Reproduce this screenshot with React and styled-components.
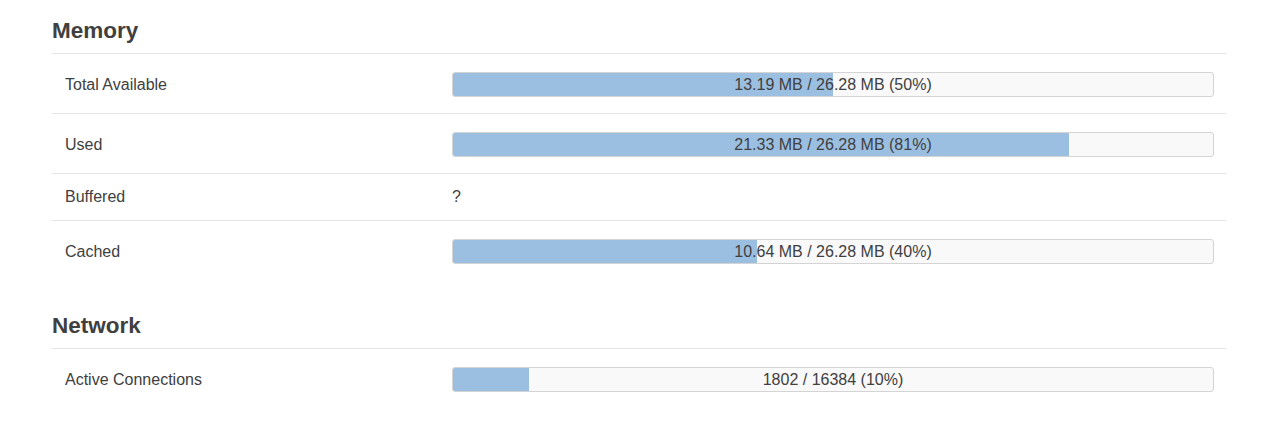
import React from 'react'
import styled, { createGlobalStyle } from 'styled-components'

const GlobalStyle = createGlobalStyle`
  html, body {
    margin: 0;
    padding: 0;
    background: #fff;
  }
  body {
    font-family: "Liberation Sans", Arial, Helvetica, sans-serif;
    color: #404040;
  }
`

const sections = [
  {
    title: 'Memory',
    rows: [
      { label: 'Total Available', value: 13.19, total: 26.28, unit: 'MB' },
      { label: 'Used', value: 21.33, total: 26.28, unit: 'MB' },
      { label: 'Buffered', text: '?' },
      { label: 'Cached', value: 10.64, total: 26.28, unit: 'MB', last: true },
    ],
  },
  {
    title: 'Network',
    rows: [{ label: 'Active Connections', value: 1802, total: 16384, last: true }],
  },
]

const Page = styled.div`
  padding: 18px 0 0 52px;
  width: 1174px;
`

const Section = styled.section`
  margin-bottom: 33px;
`

const Heading = styled.h3`
  margin: 0;
  padding: 1px 0 10px;
  font-size: 22.5px;
  line-height: 24px;
  font-weight: bold;
  color: #404040;
  border-bottom: 1px solid #e5e5e5;
`

const Row = styled.div`
  display: grid;
  grid-template-columns: 400px 1fr;
  align-items: center;
  padding: ${(p) => (p.$bar ? '18px 12px 16px 0' : '13px 12px 13px 0')};
  border-bottom: ${(p) => (p.$last ? 'none' : '1px solid #e5e5e5')};
`

const Label = styled.div`
  padding-left: 13px;
  font-size: 16px;
  line-height: 20px;
  color: #404040;
`

const Value = styled.div`
  font-size: 16px;
  line-height: 20px;
  color: #404040;
`

const Bar = styled.div`
  position: relative;
  box-sizing: border-box;
  height: 25px;
  background: #f9f9f9;
  border: 1px solid #d4d4d4;
  border-radius: 3px;
  overflow: hidden;
`

const Fill = styled.div`
  height: 100%;
  background: #9bbfe0;
`

const BarText = styled.span`
  position: absolute;
  inset: 0;
  display: flex;
  align-items: center;
  justify-content: center;
  font-size: 16px;
  color: #404040;
  white-space: nowrap;
`

const Progress = ({ value, total, unit }) => {
  const pct = Math.floor((value / total) * 100)
  const text = unit
    ? `${value.toFixed(2)} ${unit} / ${total.toFixed(2)} ${unit} (${pct}%)`
    : `${value} / ${total} (${pct}%)`
  return (
    <Bar>
      <Fill style={{ width: `${pct}%` }} />
      <BarText>{text}</BarText>
    </Bar>
  )
}

const App = () => {
  return (
    <>
      <GlobalStyle />
      <Page>
        {sections.map((section) => (
          <Section key={section.title}>
            <Heading>{section.title}</Heading>
            {section.rows.map((row) => (
              <Row key={row.label} $bar={row.text === undefined} $last={row.last}>
                <Label>{row.label}</Label>
                {row.text !== undefined ? (
                  <Value>{row.text}</Value>
                ) : (
                  <Progress value={row.value} total={row.total} unit={row.unit} />
                )}
              </Row>
            ))}
          </Section>
        ))}
      </Page>
    </>
  )
}

export default App
